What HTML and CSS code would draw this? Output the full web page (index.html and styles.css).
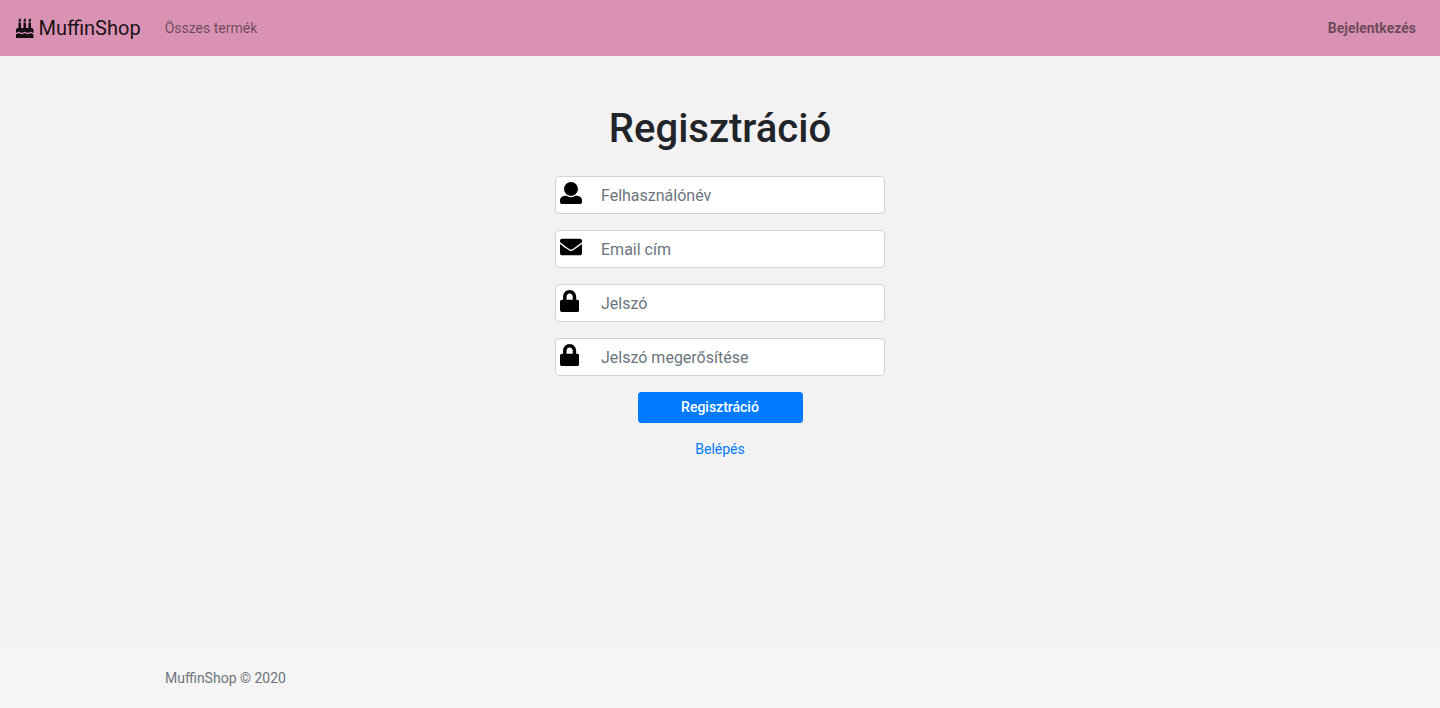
FILE: index.html
```html
<!DOCTYPE html>
<html lang="hu">
<head>
  <meta charset="utf-8">
  <meta name="viewport" content="width=device-width, initial-scale=1">
  <title>MuffinShop</title>
  <link rel="stylesheet" href="styles.css">
</head>
<body>
  <header class="navbar">
    <a class="brand" href="#">
      <svg class="brand-icon" viewBox="0 0 448 512" aria-hidden="true"><path d="M448 384c-28.02 0-31.26-32-74.5-32-43.43 0-46.825 32-74.75 32-27.695 0-31.454-32-74.75-32-42.842 0-47.218 32-74.5 32-28.148 0-31.202-32-74.75-32-43.547 0-46.653 32-74.75 32v-80c0-26.5 21.5-48 48-48h16V112h64v144h64V112h64v144h64V112h64v144h16c26.5 0 48 21.5 48 48v80zm0 128H0v-96c43.356 0 46.767-32 74.75-32 27.951 0 31.253 32 74.75 32 42.843 0 47.217-32 74.5-32 28.148 0 31.201 32 74.75 32 43.357 0 46.767-32 74.75-32 27.488 0 31.252 32 74.5 32v96zM96 96c-17.75 0-32-14.25-32-32 0-31 32-23 32-64 12 0 32 29.5 32 56s-14.25 40-32 40zm128 0c-17.75 0-32-14.25-32-32 0-31 32-23 32-64 12 0 32 29.5 32 56s-14.25 40-32 40zm128 0c-17.75 0-32-14.25-32-32 0-31 32-23 32-64 12 0 32 29.5 32 56s-14.25 40-32 40z"/></svg>
      <span>MuffinShop</span>
    </a>
    <nav class="nav">
      <a class="nav-link" href="#">Összes termék</a>
      <a class="nav-link nav-login" href="#">Bejelentkezés</a>
    </nav>
  </header>

  <main class="main">
    <form class="form">
      <h1 class="title">Regisztráció</h1>
      <label class="field">
        <svg class="field-icon" viewBox="0 0 512 512" aria-hidden="true"><path d="M256 0c88.366 0 160 71.634 160 160s-71.634 160-160 160S96 248.366 96 160 167.634 0 256 0zm183.283 333.821l-71.313-17.828c-74.923 53.89-165.738 41.864-223.94 0l-71.313 17.828C29.981 344.505 0 382.903 0 426.955V464c0 26.51 21.49 48 48 48h416c26.51 0 48-21.49 48-48v-37.045c0-44.052-29.981-82.45-72.717-93.134z"/></svg>
        <input class="input" type="text" placeholder="Felhasználónév" aria-label="Felhasználónév">
      </label>
      <label class="field">
        <svg class="field-icon" viewBox="0 0 512 512" aria-hidden="true"><path d="M502.3 190.8c3.9-3.1 9.7-.2 9.7 4.7V400c0 26.5-21.5 48-48 48H48c-26.5 0-48-21.5-48-48V195.600c0-5 5.7-7.8 9.7-4.7 22.4 17.4 52.1 39.5 154.1 113.6 21.1 15.4 56.7 47.8 92.2 47.6 35.7.3 72-32.8 92.3-47.6 102-74.1 131.6-96.3 154-113.7zM256 320c23.2.4 56.6-29.2 73.4-41.4 132.7-96.3 142.8-104.7 173.4-128.7 5.8-4.5 9.2-11.5 9.2-18.9v-19c0-26.5-21.5-48-48-48H48c-26.5 0-48 21.5-48 48v19c0 7.4 3.4 14.3 9.2 18.9 30.6 23.9 40.7 32.4 173.4 128.7 16.8 12.2 50.2 41.8 73.4 41.4z"/></svg>
        <input class="input" type="email" placeholder="Email cím" aria-label="Email cím">
      </label>
      <label class="field">
        <svg class="field-icon" viewBox="0 0 448 512" aria-hidden="true"><path d="M400 224h-24v-72C376 68.2 307.8 0 224 0S72 68.2 72 152v72H48c-26.5 0-48 21.5-48 48v192c0 26.5 21.5 48 48 48h352c26.5 0 48-21.5 48-48V272c0-26.5-21.5-48-48-48zm-104 0H152v-72c0-39.7 32.3-72 72-72s72 32.3 72 72v72z"/></svg>
        <input class="input" type="password" placeholder="Jelszó" aria-label="Jelszó">
      </label>
      <label class="field">
        <svg class="field-icon" viewBox="0 0 448 512" aria-hidden="true"><path d="M400 224h-24v-72C376 68.2 307.8 0 224 0S72 68.2 72 152v72H48c-26.5 0-48 21.5-48 48v192c0 26.5 21.5 48 48 48h352c26.5 0 48-21.5 48-48V272c0-26.5-21.5-48-48-48zm-104 0H152v-72c0-39.7 32.3-72 72-72s72 32.3 72 72v72z"/></svg>
        <input class="input" type="password" placeholder="Jelszó megerősítése" aria-label="Jelszó megerősítése">
      </label>
      <button class="submit" type="submit">Regisztráció</button>
      <a class="login-link" href="#">Belépés</a>
    </form>
  </main>

  <footer class="footer">
    <div class="container">MuffinShop © 2020</div>
  </footer>
</body>
</html>
```

FILE: styles.css
```css
* {
  box-sizing: border-box;
}

body {
  margin: 0;
  min-height: 100vh;
  display: flex;
  flex-direction: column;
  background: #f2f2f2;
  color: #212529;
  font-family: Roboto, "Open Sans", sans-serif;
  font-size: 14px;
  line-height: 20px;
}

a {
  color: #007bff;
  text-decoration: none;
}

.navbar {
  display: flex;
  align-items: center;
  gap: 16px;
  padding: 8px 16px;
  background: #d992b3;
}

.brand {
  display: flex;
  align-items: center;
  gap: 5px;
  padding: 5px 0;
  color: rgba(0, 0, 0, 0.9);
  font-size: 20px;
  line-height: 30px;
}

.brand-icon {
  height: 20px;
  fill: currentColor;
}

.nav {
  flex: 1;
  display: flex;
  justify-content: space-between;
}

.nav-link {
  padding: 8px;
  color: rgba(0, 0, 0, 0.5);
}

.nav-login {
  font-weight: 700;
}

.main {
  flex: 1;
  padding: 48px 15px;
}

.form {
  display: flex;
  flex-direction: column;
  align-items: center;
  gap: 16px;
  max-width: 330px;
  margin: 0 auto;
}

.title {
  margin: 0 0 6px;
  font-size: 40px;
  font-weight: 500;
  line-height: 50px;
}

.field {
  position: relative;
  width: 100%;
}

.field-icon {
  position: absolute;
  top: 6px;
  left: 5px;
  height: 22px;
}

.input {
  display: block;
  width: 100%;
  height: 38px;
  padding: 6px 12px 6px 45px;
  border: 1px solid #ced4da;
  border-radius: 4px;
  background: #fff;
  color: #495057;
  font: inherit;
  font-size: 16px;
  line-height: 24px;
}

.input::placeholder {
  color: #6c757d;
  opacity: 1;
}

.submit {
  width: 50%;
  padding: 4px 8px;
  border: 1px solid #007bff;
  border-radius: 3px;
  background: #007bff;
  color: #fff;
  font: inherit;
  font-weight: 500;
  line-height: 21px;
}

.footer {
  padding: 20px 0;
  background: #f5f5f5;
  color: #6c757d;
}

.container {
  max-width: 1140px;
  margin: 0 auto;
  padding: 0 15px;
}
```
